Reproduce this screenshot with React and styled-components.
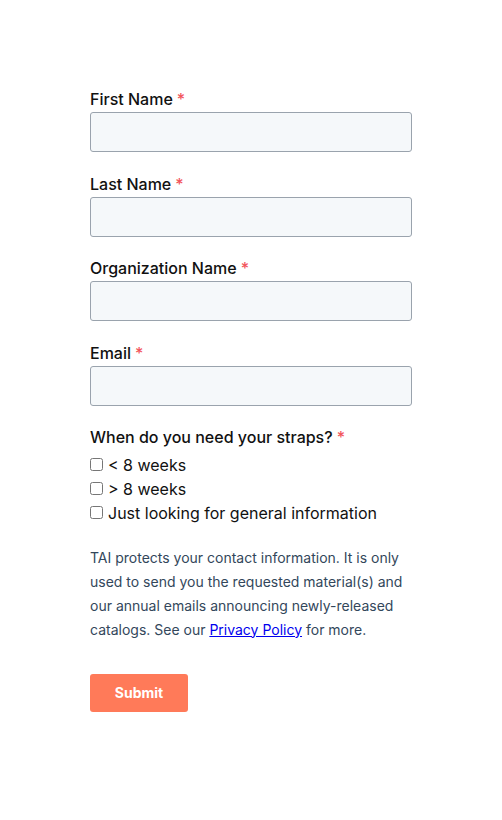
import styled, { createGlobalStyle } from 'styled-components';

const GlobalStyle = createGlobalStyle`
  body {
    margin: 0;
    background: #fff;
    font-family: Inter, "Liberation Sans", sans-serif;
  }
`

const Page = styled.div`
  display: flex;
  justify-content: center;
  padding-top: 87px;
`

const Form = styled.form`
  width: 322px;
  display: flex;
  flex-direction: column;
`

const Field = styled.div`
  display: flex;
  flex-direction: column;
  margin-bottom: 19.67px;
`

const Label = styled.label`
  font-size: 16px;
  line-height: 24px;
  font-weight: 500;
  color: #111;
  margin-bottom: 1px;
`

const Question = styled(Label)`
  margin-top: -1px;
`

const Req = styled.span`
  color: #f2545b;
  margin-left: 4px;
`

const Input = styled.input`
  box-sizing: border-box;
  height: 40px;
  width: 100%;
  background: #f5f8fa;
  border: 1px solid #9aa3ad;
  border-radius: 3px;
  font-family: inherit;
  font-size: 16px;
  padding: 0 12px;
  outline: none;
`

const Checks = styled.div`
  display: flex;
  flex-direction: column;
  margin-top: 3px;
`

const CheckRow = styled.label`
  display: flex;
  align-items: center;
  height: 24px;
  font-size: 16px;
  color: #111;

  input {
    margin: 0 5px 0 0;
    width: 13px;
    height: 13px;
  }
`

const Note = styled.p`
  margin: 21px 0 32px;
  font-size: 14px;
  line-height: 24px;
  color: #33475b;

  a {
    color: #0000ee;
    text-decoration: underline;
  }
`

const Submit = styled.button`
  align-self: flex-start;
  width: 98px;
  height: 38px;
  background: #ff7a59;
  color: #fff;
  border: none;
  border-radius: 3px;
  font-family: inherit;
  font-size: 14px;
  font-weight: 700;
  cursor: pointer;
`

const fields = ['First Name', 'Last Name', 'Organization Name', 'Email']
const options = ['< 8 weeks', '> 8 weeks', 'Just looking for general information']

export default function App() {
  return (
    <>
      <GlobalStyle />
      <Page>
        <Form onSubmit={(e) => e.preventDefault()}>
          {fields.map((f) => (
            <Field key={f}>
              <Label>{f}<Req>*</Req></Label>
              <Input type={f === 'Email' ? 'email' : 'text'} />
            </Field>
          ))}
          <Question>When do you need your straps?<Req>*</Req></Question>
          <Checks>
            {options.map((o) => (
              <CheckRow key={o}>
                <input type="checkbox" />
                {o}
              </CheckRow>
            ))}
          </Checks>
          <Note>
            TAI protects your contact information. It is only used to send you the requested material(s) and our annual emails announcing newly-released catalogs. See our <a href="#">Privacy Policy</a> for more.
          </Note>
          <Submit type="submit">Submit</Submit>
        </Form>
      </Page>
    </>
  )
}
